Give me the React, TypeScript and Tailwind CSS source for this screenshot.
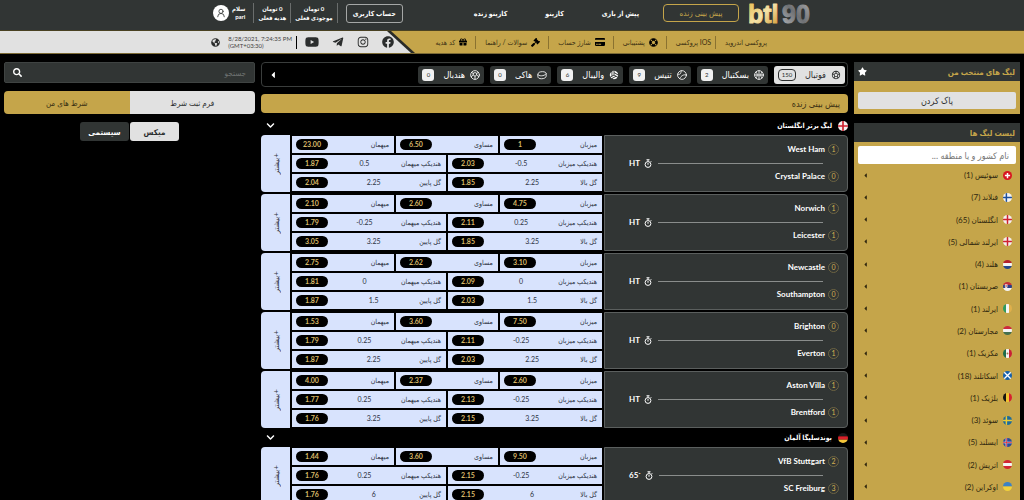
import { useState } from 'react';
import type { ReactNode } from 'react';
import {
  FaCaretLeft,
  FaChevronDown,
  FaCreditCard,
  FaFacebook,
  FaGavel,
  FaGift,
  FaGlobeAmericas,
  FaInstagram,
  FaLifeRing,
  FaSearch,
  FaStar,
  FaTelegramPlane,
  FaYoutube,
} from 'react-icons/fa';
import { MdSportsSoccer, MdSportsVolleyball } from 'react-icons/md';
import { LuUserRound } from 'react-icons/lu';

type IconProps = { className?: string };

type Match = {
  home: string;
  away: string;
  score: [number, number];
  time: string;
  result: [string, string, string];
  handicap: [string, string, string, string];
  total: [string, string, string, string];
};

function LineIcon({ className, children }: IconProps & { children: ReactNode }) {
  return (
    <svg viewBox="0 0 24 24" className={className} fill="none" stroke="currentColor" strokeWidth="2" strokeLinecap="round" aria-hidden="true">
      {children}
    </svg>
  );
}

const BasketballIcon = ({ className }: IconProps) => (
  <LineIcon className={className}>
    <circle cx="12" cy="12" r="10.500" />
    <path d="M12 2v20M2 12h20M5 5c4 4 4 10 0 14M19 5c-4 4-4 10 0 14" />
  </LineIcon>
);

const TennisIcon = ({ className }: IconProps) => (
  <LineIcon className={className}>
    <circle cx="12" cy="12" r="10.500" />
    <path d="M2 10c5 2 8-1 8-8M22 12c-5-2-12 1-15 8" />
  </LineIcon>
);

const PuckIcon = ({ className }: IconProps) => (
  <LineIcon className={className}>
    <path d="M2 10c0-4 5-6 11-6s9 2 9 5v6c0 3-5 6-11 6s-9-2-9-5zM2 11c2 4 15 5 20-2" />
  </LineIcon>
);

const HandballIcon = ({ className }: IconProps) => (
  <LineIcon className={className}>
    <circle cx="12" cy="12" r="10.500" />
    <path d="M8 8l4-2 4 2v4l-4 3-4-3zM8 8L4 6M16 8l4-2M12 15v7M8 12l-5 4M16 12l5 4" />
  </LineIcon>
);

const StopwatchIcon = ({ className }: IconProps) => (
  <svg viewBox="0 0 16 18" className={className} fill="none" stroke="currentColor" strokeWidth="2" aria-hidden="true">
    <circle cx="8" cy="11" r="5.800" />
    <path d="M5 1.500h6M8 2v3M8 8v3.500M13 4l1.500 1.500" />
  </svg>
);

const sports = [
  { name: 'فوتبال', count: 150, Icon: MdSportsSoccer },
  { name: 'بسکتبال', count: 2, Icon: BasketballIcon },
  { name: 'تنیس', count: 9, Icon: TennisIcon },
  { name: 'والیبال', count: 6, Icon: MdSportsVolleyball },
  { name: 'هاکی', count: 0, Icon: PuckIcon },
  { name: 'هندبال', count: 0, Icon: HandballIcon },
];

const leagues: { name: string; flag: string; matches: Match[] }[] = [
  {
    name: 'لیگ برتر انگلستان',
    flag: 'england',
    matches: [
      { home: 'West Ham', away: 'Crystal Palace', score: [1, 0], time: 'HT', result: ['1', '6.50', '23.00'], handicap: ['-0.5', '2.03', '0.5', '1.87'], total: ['2.25', '1.85', '2.25', '2.04'] },
      { home: 'Norwich', away: 'Leicester', score: [1, 1], time: 'HT', result: ['4.75', '2.60', '2.10'], handicap: ['0.25', '2.11', '-0.25', '1.79'], total: ['3.25', '1.85', '3.25', '3.05'] },
      { home: 'Newcastle', away: 'Southampton', score: [0, 0], time: 'HT', result: ['3.10', '2.62', '2.75'], handicap: ['0', '2.09', '0', '1.81'], total: ['1.5', '2.03', '1.5', '1.87'] },
      { home: 'Brighton', away: 'Everton', score: [0, 1], time: 'HT', result: ['7.50', '3.60', '1.53'], handicap: ['-0.25', '2.11', '0.25', '1.79'], total: ['2.25', '2.03', '2.25', '1.87'] },
      { home: 'Aston Villa', away: 'Brentford', score: [1, 1], time: 'HT', result: ['2.60', '2.37', '4.00'], handicap: ['-0.25', '2.13', '0.25', '1.77'], total: ['3.25', '2.15', '3.25', '1.76'] },
    ],
  },
  {
    name: 'بوندسلیگا آلمان',
    flag: 'germany',
    matches: [
      { home: 'VfB Stuttgart', away: 'SC Freiburg', score: [2, 3], time: '65`', result: ['9.50', '3.60', '1.44'], handicap: ['-0.25', '2.15', '0.25', '1.76'], total: ['6', '2.15', '6', '1.76'] },
    ],
  },
];

const countries = [
  { name: 'سوئیس', count: 1, flag: 'switzerland' },
  { name: 'فنلاند', count: 7, flag: 'finland' },
  { name: 'انگلستان', count: 65, flag: 'england' },
  { name: 'ایرلند شمالی', count: 5, flag: 'england' },
  { name: 'هلند', count: 4, flag: 'netherlands' },
  { name: 'صربستان', count: 1, flag: 'serbia' },
  { name: 'ایرلند', count: 1, flag: 'ireland' },
  { name: 'مجارستان', count: 2, flag: 'hungary' },
  { name: 'مکزیک', count: 1, flag: 'mexico' },
  { name: 'اسکاتلند', count: 18, flag: 'scotland' },
  { name: 'بلژیک', count: 1, flag: 'belgium' },
  { name: 'سوئد', count: 3, flag: 'sweden' },
  { name: 'ایسلند', count: 5, flag: 'iceland' },
  { name: 'اتریش', count: 2, flag: 'austria' },
  { name: 'اوکراین', count: 2, flag: 'ukraine' },
];

const rows = (...colors: string[]) =>
  colors.map((c, i) => <rect key={i} x="0" y={(i * 12) / colors.length} width="12" height={12 / colors.length} fill={c} />);

const cols = (...colors: string[]) =>
  colors.map((c, i) => <rect key={i} y="0" x={(i * 12) / colors.length} height="12" width={12 / colors.length} fill={c} />);

const cross = (bg: string, fg: string, x = 5) => (
  <>
    <rect width="12" height="12" fill={bg} />
    <path d={`M${x} 0h2v12h-2zM0 5h12v2H0z`} fill={fg} />
  </>
);

const flags: Record<string, ReactNode> = {
  switzerland: (
    <>
      <rect width="12" height="12" fill="#d8141f" />
      <path d="M5 2.500h2V5h2.500v2H7v2.500H5V7H2.500V5H5z" fill="#fff" />
    </>
  ),
  finland: cross('#f4f4f4', '#1d4f9c', 3.5),
  england: cross('#f4f0ee', '#cf2230'),
  netherlands: rows('#b3202c', '#f4f4f4', '#23468c'),
  serbia: (
    <>
      {rows('#c2303a', '#2c3f86', '#f4f4f4')}
      <path d="M2.500 3h3.500v4L4.200 8.500 2.500 7z" fill="#e8e2e4" />
      <circle cx="4.200" cy="5.300" r="1" fill="#c2303a" />
    </>
  ),
  ireland: cols('#2d9a5f', '#f6f6f6', '#e0b04c'),
  hungary: rows('#cd2a3e', '#f4f4f4', '#436f4d'),
  mexico: (
    <>
      {cols('#1f6b4a', '#f4f4f4', '#c91f35')}
      <circle cx="6" cy="6" r="1.300" fill="#9b7b4b" />
    </>
  ),
  scotland: (
    <>
      <rect width="12" height="12" fill="#1560ac" />
      <path d="M0 0l12 12M12 0L0 12" stroke="#fff" strokeWidth="1.800" />
    </>
  ),
  belgium: cols('#16130f', '#f2c230', '#d8202f'),
  sweden: cross('#1c6a9c', '#eccb35', 3.5),
  iceland: (
    <>
      {cross('#2b4a98', '#f1f1f1', 3.5)}
      <path d="M4 0h1v12H4zM0 5.500h12v1H0z" fill="#d42c3c" />
    </>
  ),
  austria: rows('#d22533', '#f4f4f4', '#d22533'),
  ukraine: rows('#3c82c4', '#f2d13c'),
  germany: rows('#1a1a1a', '#d8202a', '#f4c63a'),
};

function Flag({ name, className }: { name: string; className: string }) {
  return (
    <svg viewBox="0 0 12 12" className={`${className} shrink-0 rounded-full`} aria-hidden="true">
      {flags[name]}
    </svg>
  );
}

function Logo() {
  return (
    <svg viewBox="0 0 66 30" className="w-[66px] h-[30px]" role="img" aria-label="btl90">
      <defs>
        <linearGradient id="gold" x1="0" x2="1" y1="0" y2="1">
          <stop offset="0" stopColor="#e7b84a" />
          <stop offset="0.500" stopColor="#f6e3a8" />
          <stop offset="1" stopColor="#cf962a" />
        </linearGradient>
        <linearGradient id="silver" x1="0" x2="1" y1="1" y2="0">
          <stop offset="0" stopColor="#b5b7ba" />
          <stop offset="0.500" stopColor="#6f7174" />
          <stop offset="1" stopColor="#a9abad" />
        </linearGradient>
      </defs>
      <g direction="ltr" fontFamily="'Liberation Sans', sans-serif" fontWeight="700" fontSize="25" strokeWidth="1" strokeLinejoin="round">
        <text x="2" y="23" fill="url(#gold)" stroke="url(#gold)">btl</text>
        <text x="36" y="23" fill="url(#silver)" stroke="url(#silver)">90</text>
      </g>
    </svg>
  );
}

function Price({ value }: { value: string }) {
  return (
    <span className="w-8 h-[11px] shrink-0 rounded-full bg-black text-[#d9b968] text-[7px] leading-[11px] font-bold text-center">
      {value}
    </span>
  );
}

function Odd({ label, line, price }: { label: string; line?: string; price: string }) {
  return (
    <button className="flex-1 h-[17px] flex items-center justify-between ps-[5px] pe-1 bg-[#d8e3fd] text-[#2c3242] text-[7px] whitespace-nowrap">
      <span>{label}</span>
      {line && <span dir="ltr">{line}</span>}
      <Price value={price} />
    </button>
  );
}

function Team({ name, score }: { name: string; score: number }) {
  return (
    <div className="flex items-center gap-[3px]">
      <span className="size-[11px] rounded-full border border-[#6d6442] text-[#d5b251] text-[7px] leading-[9px] font-normal text-center">{score}</span>
      <span>{name}</span>
    </div>
  );
}

function MatchCard({ match }: { match: Match }) {
  const { result, handicap, total } = match;
  return (
    <div className="grid grid-cols-[minmax(0,244fr)_minmax(0,310fr)_29px] h-[57px] gap-[2px]">
      <div className="flex flex-col justify-between pt-2 pb-[9px] ps-2 pe-6 rounded-s-[4px] border border-[#5b5f5e] bg-[#313534] text-white text-[8px] leading-[11px] font-bold">
        <Team name={match.home} score={match.score[0]} />
        <div className="flex items-center ps-4">
          <span className="flex-1 h-px bg-[#8a8d8c]" />
          <StopwatchIcon className="h-[9px] w-2 ms-[6px] me-1" />
          <span dir="ltr" className="min-w-[10px]">{match.time}</span>
        </div>
        <Team name={match.away} score={match.score[1]} />
      </div>
      <div className="flex flex-col gap-[2px] py-px">
        <div className="flex gap-[2px]">
          <Odd label="میزبان" price={result[0]} />
          <Odd label="مساوی" price={result[1]} />
          <Odd label="میهمان" price={result[2]} />
        </div>
        <div className="flex gap-[2px]">
          <Odd label="هندیکپ میزبان" line={handicap[0]} price={handicap[1]} />
          <Odd label="هندیکپ میهمان" line={handicap[2]} price={handicap[3]} />
        </div>
        <div className="flex gap-[2px]">
          <Odd label="گل بالا" line={total[0]} price={total[1]} />
          <Odd label="گل پایین" line={total[2]} price={total[3]} />
        </div>
      </div>
      <button className="flex items-center justify-center rounded-e-[4px] bg-[#d8e3fd] text-[#2c3242] text-[8px]">
        <span className="[writing-mode:vertical-rl] rotate-180">+بیشتر</span>
      </button>
    </div>
  );
}

function Balance({ title }: { title: string }) {
  return (
    <div className="h-5 flex flex-col justify-center px-1 border-s border-[#6a6d6c] text-white text-[6px] leading-[9px] font-bold text-center whitespace-nowrap">
      <span>0 تومان</span>
      <span>{title}</span>
    </div>
  );
}

function Header() {
  return (
    <header>
      <div className="h-[31px] flex items-center pb-1 ps-[212px] pe-[213px] bg-[#313534] border-b border-[#4a4222] text-white text-[8px] font-bold whitespace-nowrap">
        <a href="#home" className="self-start">
          <Logo />
        </a>
        <nav className="flex items-center">
          <a href="#live" className="w-[76px] h-[18px] ms-[7px] me-6 flex items-center justify-center rounded-[4px] border border-[#c5a54a] text-[#c5a54a] font-normal">
            پیش بینی زنده
          </a>
          <div className="flex gap-[38px] text-[7px]">
            <a href="#prematch">پیش از بازی</a>
            <a href="#casino">کازینو</a>
            <a href="#live-casino">کازینو زنده</a>
          </div>
        </nav>
        <div className="ms-auto flex items-center">
          <button className="w-[57px] h-[19px] me-2 rounded-[3px] border border-[#a5a7a6] text-[7px]">حساب کاربری</button>
          <Balance title="موجودی فعلی" />
          <Balance title="هدیه فعلی" />
          <div className="h-5 flex items-center gap-[3px] ps-2 border-s border-[#6a6d6c] text-[6px] leading-[8px]">
            <div className="flex flex-col">
              <span>سلام</span>
              <span>pari</span>
            </div>
            <span className="size-4 flex items-center justify-center rounded-full bg-white text-[#313534]">
              <LuUserRound className="size-[10px]" />
            </span>
          </div>
        </div>
      </div>

      <div className="h-[23px] flex items-center justify-between ps-[257px] bg-[#c5a54a] border-b border-[#7c6a35] text-[#3a3013] text-[7px] whitespace-nowrap">
        <nav className="flex items-center divide-x divide-[#8a7230] *:h-[13px] *:flex *:items-center *:gap-1">
          <a href="#android" className="pe-[9px]">پروکسی اندروید</a>
          <a href="#ios" className="ps-1 pe-[9px]">IOS پروکسی</a>
          <a href="#support" className="ps-2 pe-[9px]"><FaLifeRing className="size-[9px] text-black" />پشتیبانی</a>
          <a href="#charge" className="ps-2 pe-[9px]"><FaCreditCard className="size-[10px] text-black" />شارژ حساب</a>
          <a href="#faq" className="ps-2 pe-[9px]"><FaGavel className="size-[9px] text-black" />سوالات / راهنما</a>
          <a href="#gift" className="ps-2"><FaGift className="size-[8px] text-black" />کد هدیه</a>
        </nav>
        <div className="h-full w-[415px] shrink-0 ps-1 bg-[#2a2b27] [clip-path:polygon(0_0,calc(100%-24px)_0,100%_100%,0_100%)]">
          <div className="h-full flex items-center ps-[17px] bg-[#e1e1e1] text-[#2b2d2d] [clip-path:polygon(0_0,calc(100%-24px)_0,100%_100%,0_100%)]">
            <div className="flex items-center gap-[13px]">
              <a href="#facebook" aria-label="Facebook"><FaFacebook className="size-3" /></a>
              <a href="#instagram" aria-label="Instagram"><FaInstagram className="size-3" /></a>
              <a href="#telegram" aria-label="Telegram"><FaTelegramPlane className="size-3" /></a>
              <a href="#youtube" aria-label="YouTube"><FaYoutube className="size-[14px]" /></a>
            </div>
            <div dir="ltr" className="me-2 pe-1 h-[13px] flex items-center border-r border-black text-[6px] leading-[7px] text-[#444]">
              <span>8/28/2021, 7:24:35 PM<br />(GMT+03:30)</span>
            </div>
            <FaGlobeAmericas className="size-[9px] ms-2" />
          </div>
        </div>
      </div>
    </header>
  );
}

function LeagueSidebar() {
  const [query, setQuery] = useState('');
  const visible = countries.filter((c) => c.name.includes(query));

  return (
    <aside className="flex flex-col gap-[9px] text-[9px]">
      <section className="bg-[#c5a54a]">
        <h2 className="h-[19px] flex items-center justify-between ps-[5px] pe-1 bg-[#313534] text-[#c5a54a] text-[8px] font-bold">
          لیگ های منتخب من
          <FaStar className="size-[9px] text-white" />
        </h2>
        <div className="px-1 pt-[11px] pb-[5px]">
          <button className="block w-full h-[17px] rounded-[2px] bg-[#e1e1e1] text-[#2b2d2d]">پاک کردن</button>
        </div>
      </section>
      <section className="flex-1 flex flex-col bg-[#c5a54a]">
        <h2 className="h-[19px] flex items-center ps-[5px] bg-[#313534] text-[#c5a54a] text-[8px] font-bold">لیست لیگ ها</h2>
        <div className="px-1 pt-1">
          <input
            type="text"
            value={query}
            onChange={(e) => setQuery(e.target.value)}
            aria-label="نام کشور و یا منطقه"
            placeholder="نام کشور و یا منطقه ..."
            className="block w-full h-[18px] px-[7px] rounded-[2px] bg-white text-[#333] placeholder:text-[#777] focus:outline-none"
          />
        </div>
        <ul className="flex-1 flex flex-col pb-[2px] text-[8px] text-[#2f270f]">
          {visible.map((c) => (
            <li key={c.name} className="flex-1 min-h-[22px] flex">
              <button className="w-full flex items-center gap-[5px] px-2">
                <Flag name={c.flag} className="size-[9px]" />
                <span>{c.name} ({c.count})</span>
                <FaCaretLeft className="size-[7px] ms-auto" />
              </button>
            </li>
          ))}
        </ul>
      </section>
    </aside>
  );
}

function LiveBoard() {
  const [active, setActive] = useState('فوتبال');

  return (
    <main className="min-w-0">
      <div className="h-[25px] flex items-center gap-[6px] px-[2px] rounded-[4px] border border-[#3a3d3c] text-[9px]">
        {sports.map(({ name, count, Icon }) => (
          <button
            key={name}
            onClick={() => setActive(name)}
            className={`h-[18px] flex items-center gap-[5px] px-1 rounded-[3px] ${
              active === name ? 'bg-[#e1e1e1] text-[#2b2d2d]' : 'bg-[#313534] text-white'
            }`}
          >
            <Icon className="size-[10px]" />
            <span>{name}</span>
            <span
              className={`h-3 flex items-center justify-center ms-1 text-[6px] ${
                active === name ? 'w-[18px] rounded-[4px] border border-[#2b2d2d]' : 'w-3 rounded-[3px] bg-[#f1f1f1] text-[#2b2d2d]'
              }`}
            >
              {count}
            </span>
          </button>
        ))}
        <button aria-label="ورزش های بیشتر" className="ms-auto me-1">
          <FaCaretLeft className="size-[10px] text-white" />
        </button>
      </div>

      <h1 className="h-[19px] mt-[7px] flex items-center px-2 rounded-[4px] bg-[#c5a54a] text-[#3a3013] text-[9px]">
        پیش بینی زنده
      </h1>

      <div className="pt-[3px]">
        {leagues.map((league) => (
          <section key={league.name}>
            <h2 className="h-[19px] flex items-center gap-[6px] pe-[5px] text-white text-[7px] font-bold">
              <Flag name={league.flag} className="size-[10px]" />
              {league.name}
              <FaChevronDown className="size-[9px] ms-auto" />
            </h2>
            <div className="flex flex-col gap-[2px]">
              {league.matches.map((m) => (
                <MatchCard key={m.home} match={m} />
              ))}
            </div>
          </section>
        ))}
      </div>
    </main>
  );
}

function BetSlip() {
  const [mode, setMode] = useState('mix');

  return (
    <aside className="text-[8px]">
      <label className="h-[21px] flex items-center px-2 rounded-[2px] bg-[#313534] border border-[#3f4342]">
        <input type="search" placeholder="جستجو" aria-label="جستجو" className="flex-1 min-w-0 bg-transparent text-white placeholder:text-[#6f7372] focus:outline-none" />
        <FaSearch className="size-[9px] text-white" />
      </label>
      <div className="h-[23px] mt-2 flex rounded-[4px] overflow-hidden">
        <button className="flex-1 bg-[#e1e1e1] text-[#2b2d2d]">فرم ثبت شرط</button>
        <button className="flex-1 bg-[#c5a54a] text-[#3a3013]">شرط های من</button>
      </div>
      <div className="mt-2 flex justify-center gap-px font-bold">
        <button onClick={() => setMode('mix')} className={`w-[49px] h-[19px] rounded-[3px] ${mode === 'mix' ? 'bg-[#e1e1e1] text-[#2b2d2d]' : 'bg-[#313534] text-white'}`}>
          میکس
        </button>
        <button onClick={() => setMode('system')} className={`w-[49px] h-[19px] rounded-[3px] ${mode === 'system' ? 'bg-[#e1e1e1] text-[#2b2d2d]' : 'bg-[#313534] text-white'}`}>
          سیستمی
        </button>
      </div>
    </aside>
  );
}

export default function App() {
  return (
    <div dir="rtl" lang="fa" className="h-screen overflow-hidden flex flex-col bg-black font-[Lato,'DejaVu_Sans_Condensed','DejaVu_Sans',sans-serif]">
      <Header />
      <div className="flex-1 min-h-0 grid grid-cols-[166fr_587fr_251fr] grid-rows-[minmax(0,1fr)] gap-[6px] px-1 pt-2">
        <LeagueSidebar />
        <LiveBoard />
        <BetSlip />
      </div>
    </div>
  );
}
